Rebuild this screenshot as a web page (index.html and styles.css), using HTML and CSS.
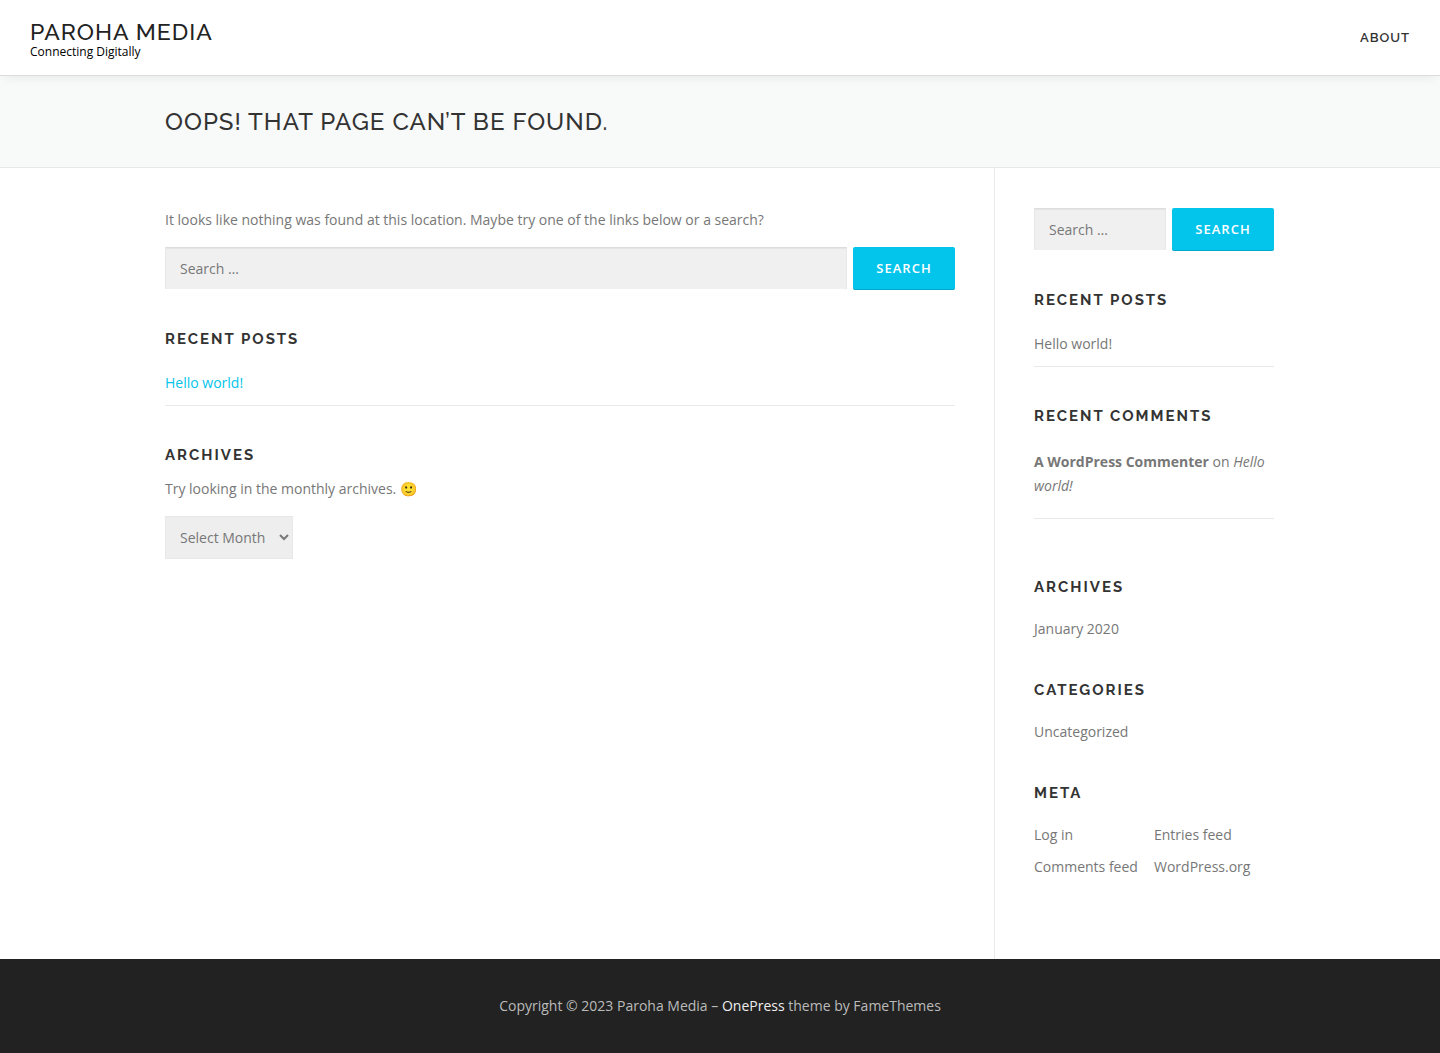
FILE: index.html
```html
<!DOCTYPE html>
<html lang="en">
<head>
<meta charset="utf-8">
<meta name="viewport" content="width=device-width, initial-scale=1">
<title>Page not found – Paroha Media</title>
<link rel="stylesheet" href="styles.css">
</head>
<body>
<header class="site-header">
  <div class="site-branding">
    <p class="site-title"><a href="#">Paroha Media</a></p>
    <p class="site-description">Connecting Digitally</p>
  </div>
  <nav class="main-nav"><a href="#">About</a></nav>
</header>
<div class="page-header">
  <div class="container"><h1 class="page-title">Oops! That page can’t be found.</h1></div>
</div>
<div class="container content-layout">
  <main class="content">
    <p class="intro">It looks like nothing was found at this location. Maybe try one of the links below or a search?</p>
    <form class="search-form">
      <input class="search-field" type="search" placeholder="Search …" aria-label="Search for">
      <button class="search-submit" type="submit">Search</button>
    </form>
    <section class="widget">
      <h2 class="widget-title">Recent Posts</h2>
      <ul class="post-list post-list-accent"><li><a href="#">Hello world!</a></li></ul>
    </section>
    <section class="widget">
      <h2 class="widget-title widget-title-tight"><label for="archives">Archives</label></h2>
      <p class="archive-note">Try looking in the monthly archives. 🙂</p>
      <select class="archive-select" id="archives"><option>Select Month</option></select>
    </section>
  </main>
  <aside class="sidebar">
    <form class="search-form">
      <input class="search-field" type="search" placeholder="Search …" aria-label="Search for">
      <button class="search-submit" type="submit">Search</button>
    </form>
    <section class="widget">
      <h2 class="widget-title">Recent Posts</h2>
      <ul class="post-list"><li><a href="#">Hello world!</a></li></ul>
    </section>
    <section class="widget widget-comments">
      <h2 class="widget-title">Recent Comments</h2>
      <ul class="comment-list"><li><a class="comment-author" href="#">A WordPress Commenter</a> on <a class="comment-post" href="#">Hello world!</a></li></ul>
    </section>
    <section class="widget">
      <h2 class="widget-title">Archives</h2>
      <ul class="link-list"><li><a href="#">January 2020</a></li></ul>
    </section>
    <section class="widget">
      <h2 class="widget-title">Categories</h2>
      <ul class="link-list"><li><a href="#">Uncategorized</a></li></ul>
    </section>
    <section class="widget">
      <h2 class="widget-title">Meta</h2>
      <ul class="link-list">
        <li><a href="#">Log in</a></li>
        <li><a href="#">Entries feed</a></li>
        <li><a href="#">Comments feed</a></li>
        <li><a href="#">WordPress.org</a></li>
      </ul>
    </section>
  </aside>
</div>
<footer class="site-footer">
  <p>Copyright © 2023 Paroha Media – <a href="#">OnePress</a> theme by FameThemes</p>
</footer>
</body>
</html>
```
FILE: styles.css
```css
*, *::before, *::after { box-sizing: border-box; }

body {
  margin: 0;
  background: #fff;
  color: #777;
  font: 14px/24px "Open Sans", "Noto Sans", sans-serif;
}

h1, h2, p, ul { margin: 0; padding: 0; }
ul { list-style: none; }
a { color: inherit; text-decoration: none; }

.container {
  width: 100%;
  max-width: 1140px;
  margin: 0 auto;
  padding: 0 15px;
}

.site-header {
  position: relative;
  display: flex;
  align-items: center;
  justify-content: space-between;
  min-height: 76px;
  padding: 0 30px;
  background: #fff;
  border-bottom: 1px solid #ddd;
  box-shadow: 0 5px 10px -4px rgba(0, 0, 0, 0.08);
}

.site-branding { padding-top: 4px; }

.site-title {
  color: #222;
  font: 500 23px/25px Raleway, Lato, sans-serif;
  letter-spacing: 1px;
  text-transform: uppercase;
}

.site-description {
  color: #000;
  font-size: 12px;
  line-height: 16px;
}

.main-nav {
  color: #333;
  font: 600 13px/24px Raleway, Lato, sans-serif;
  letter-spacing: 1px;
  text-transform: uppercase;
}

.page-header {
  padding: 30px 0;
  background: #f8f9f9;
  border-bottom: 1px solid #e9e9e9;
}

.page-title {
  color: #333;
  font: 500 24px/31px Raleway, Lato, sans-serif;
  letter-spacing: 1px;
  text-transform: uppercase;
}

.content-layout {
  display: grid;
  grid-template-columns: minmax(0, 1fr) 281px;
}

.content { padding: 40px 39px 40px 0; }

.sidebar {
  padding: 40px 1px 80px 39px;
  border-left: 1px solid #e9e9e9;
}

.intro { margin-bottom: 15px; }

.search-form {
  display: flex;
  align-items: flex-start;
  gap: 6px;
}

.search-field {
  flex: 1;
  min-width: 0;
  height: 42px;
  padding: 0 14px;
  border: 1px solid #e8e8e8;
  border-top-color: #ddd;
  border-bottom: 0;
  border-radius: 0;
  background: #f0f0f0;
  box-shadow: inset 0 1px 1px rgba(0, 0, 0, 0.05);
  color: #777;
  font: inherit;
  appearance: none;
}

.search-field::placeholder { color: #777; opacity: 1; }

.search-submit {
  width: 102px;
  height: 43px;
  padding: 0 0 2px;
  border: 0;
  border-radius: 2px;
  background: #03c4eb;
  box-shadow: inset 0 -1px 0 rgba(0, 0, 0, 0.15);
  color: #fff;
  font: 600 13px/20px "Open Sans", sans-serif;
  letter-spacing: 1px;
  text-transform: uppercase;
}

.widget { margin-top: 40px; }
.widget-comments { margin-bottom: 59px; }

.widget-title {
  margin-bottom: 21px;
  color: #333;
  font: 700 15px/18px Raleway, Lato, sans-serif;
  letter-spacing: 2px;
  text-transform: uppercase;
}

.widget-title-tight { margin-bottom: 13px; }

.post-list li {
  padding: 2px 0 10px;
  border-bottom: 1px solid #e9e9e9;
}

.post-list-accent { color: #03c4eb; }

.comment-list li {
  padding: 4px 0 20px;
  border-bottom: 1px solid #e9e9e9;
}

.comment-author { font-weight: 700; }
.comment-post { font-style: italic; }

.link-list {
  display: grid;
  grid-template-columns: 1fr 1fr;
  row-gap: 8px;
}

.archive-note { margin-bottom: 15px; }

.archive-select {
  display: block;
  height: 43px;
  padding: 0 10px;
  border: 1px solid #e8e8e8;
  border-radius: 0;
  background-color: #eee;
  color: #777;
  font: inherit;
}

.site-footer {
  padding: 35px 15px;
  background: #222;
  color: #bbb;
  text-align: center;
}

.site-footer a { color: #eee; }
```
